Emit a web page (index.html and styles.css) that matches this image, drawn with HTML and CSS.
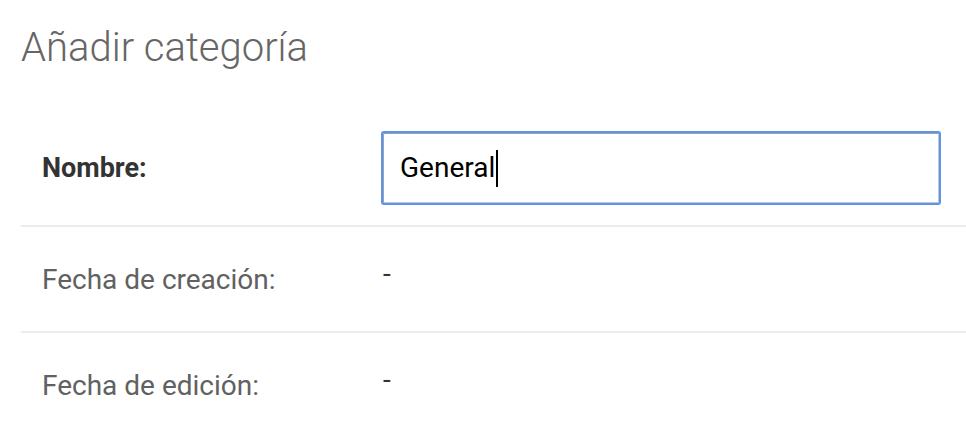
FILE: index.html
```html
<!DOCTYPE html>
<html lang="es">
<head>
<meta charset="utf-8">
<title>Añadir categoría</title>
<link rel="stylesheet" href="styles.css">
</head>
<body>
<div class="page">
  <h1 class="title">Añadir categoría</h1>
  <div class="form">
    <div class="row row-first">
      <div class="label label-strong">Nombre:</div>
      <div class="value value-input">
        <div class="input"><span class="input-text">General</span><span class="caret"></span></div>
      </div>
    </div>
    <div class="row">
      <div class="label">Fecha de creación:</div>
      <div class="value">-</div>
    </div>
    <div class="row">
      <div class="label">Fecha de edición:</div>
      <div class="value">-</div>
    </div>
  </div>
</div>
</body>
</html>
```
FILE: styles.css
```css
html, body {
  margin: 0;
  padding: 0;
  background: #fff;
}
body {
  font-family: Roboto, "Liberation Sans", sans-serif;
  overflow: hidden;
}
.page {
  padding-left: 21px;
}
.title {
  margin: 0;
  padding-top: 22px;
  height: 111px;
  box-sizing: border-box;
  font-size: 40px;
  font-weight: 300;
  color: #666;
  line-height: 52px;
}
.form {
  display: flex;
  flex-direction: column;
}
.row {
  display: grid;
  grid-template-columns: 360px 1fr;
  height: 104px;
  border-bottom: 2px solid #ececec;
}
.row-first {
  height: 114px;
}
.label {
  display: flex;
  align-items: center;
  padding-left: 21px;
  font-size: 28px;
  color: #616161;
}
.label-strong {
  font-weight: 700;
  color: #333;
  font-size: 27px;
}
.value {
  padding-top: 33px;
  padding-left: 2px;
  font-size: 28px;
  line-height: 28px;
  color: #333;
}
.value-input {
  padding: 0;
  display: flex;
  align-items: center;
}
.input {
  width: 560px;
  height: 74px;
  box-sizing: border-box;
  border: 2px solid #5b94ef;
  border-radius: 3px;
  box-shadow: inset 1px 1px 0 #a0a0a0, inset -1px -1px 0 #c8c8c8;
  display: flex;
  align-items: center;
  padding-left: 17px;
  font-size: 28px;
  color: #000;
}
.caret {
  display: inline-block;
  width: 2px;
  height: 37px;
  background: #000;
  margin-left: 1px;
}
```
